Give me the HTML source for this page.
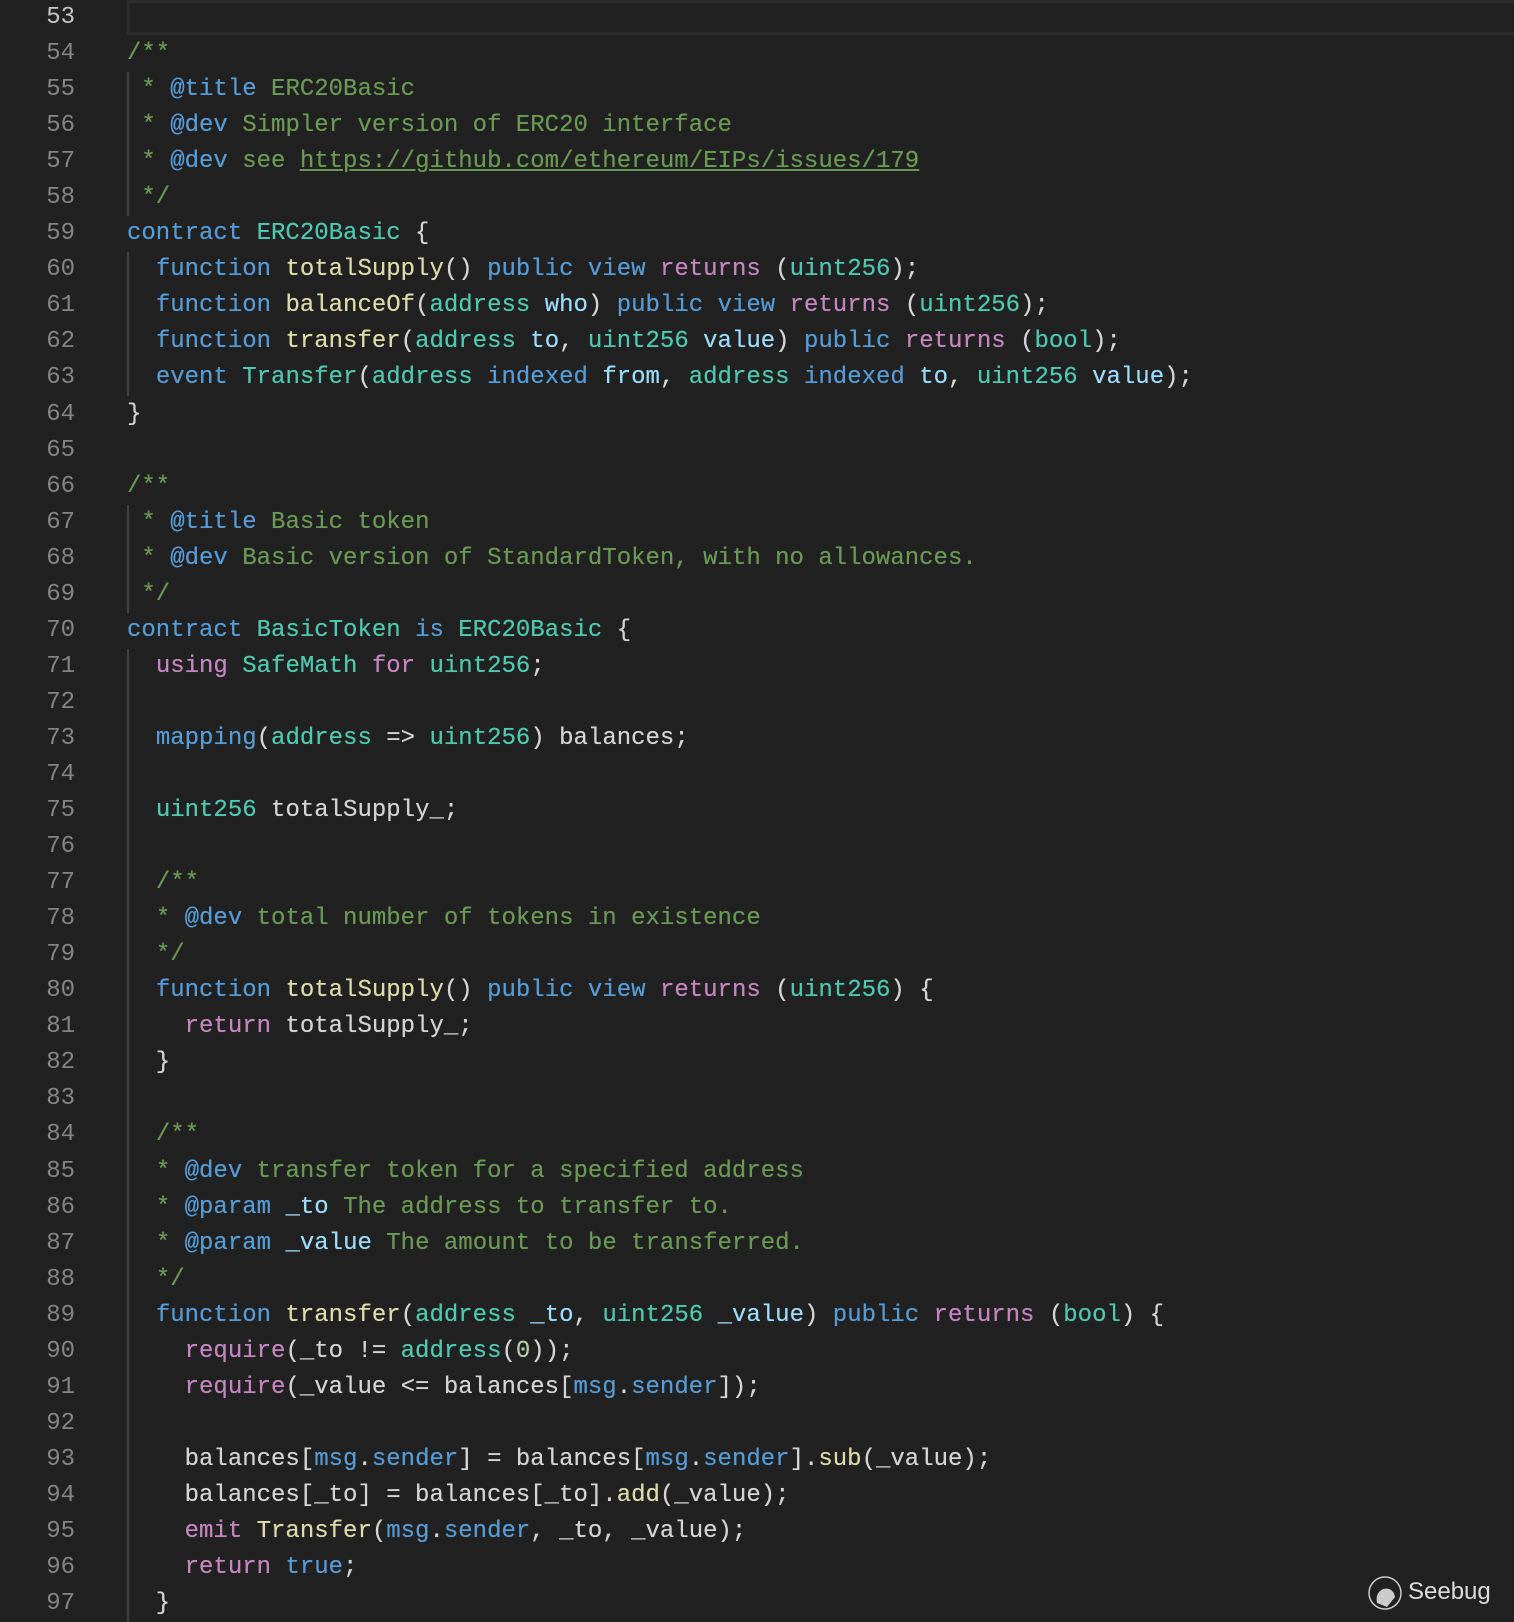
<!DOCTYPE html>
<html><head><meta charset="utf-8"><style>
html,body{margin:0;padding:0;background:#212121;width:1514px;height:1622px;overflow:hidden}
#g{position:absolute;left:0;top:0px;width:75px;text-align:right;font:24px/36.05px "Liberation Mono",monospace;color:#858585;white-space:pre}
#c{position:absolute;left:127px;top:0px;font:24px/36.05px "Liberation Mono",monospace;color:#d4d4d4;white-space:pre;margin:0;text-shadow:0 0 0.4px currentColor}
.k{color:#569cd6}.t{color:#4ec9b0}.f{color:#dcdcaa}.p{color:#c586c0}.v{color:#9cdcfe}.c{color:#6a9955}.n{color:#b5cea8}.u{text-decoration:underline}
.hl{position:absolute;left:127px;top:0;width:1400px;height:29px;border:3px solid #2c2c2c;border-right:none}
.ig{position:absolute;left:127px;width:2px;background:#404040}
#logo{position:absolute;color:#ddd;font:24px "Liberation Sans",sans-serif}
</style></head><body>
<div class="hl"></div>
<div class="ig" style="top:72px;height:144px"></div>
<div class="ig" style="top:252px;height:144px"></div>
<div class="ig" style="top:505px;height:108px"></div>
<div class="ig" style="top:649px;height:973px"></div>
<div id="g"><span style="color:#c6c6c6">53</span>
54
55
56
57
58
59
60
61
62
63
64
65
66
67
68
69
70
71
72
73
74
75
76
77
78
79
80
81
82
83
84
85
86
87
88
89
90
91
92
93
94
95
96
97</div>
<pre id="c">

<span class="c">/**</span>
<span class="c"> * <span class="k">@title</span> ERC20Basic</span>
<span class="c"> * <span class="k">@dev</span> Simpler version of ERC20 interface</span>
<span class="c"> * <span class="k">@dev</span> see <span class="u">https://github.com/ethereum/EIPs/issues/179</span></span>
<span class="c"> */</span>
<span class="k">contract</span> <span class="t">ERC20Basic</span> {
  <span class="k">function</span> <span class="f">totalSupply</span>() <span class="k">public</span> <span class="k">view</span> <span class="p">returns</span> (<span class="t">uint256</span>);
  <span class="k">function</span> <span class="f">balanceOf</span>(<span class="t">address</span> <span class="v">who</span>) <span class="k">public</span> <span class="k">view</span> <span class="p">returns</span> (<span class="t">uint256</span>);
  <span class="k">function</span> <span class="f">transfer</span>(<span class="t">address</span> <span class="v">to</span>, <span class="t">uint256</span> <span class="v">value</span>) <span class="k">public</span> <span class="p">returns</span> (<span class="t">bool</span>);
  <span class="k">event</span> <span class="t">Transfer</span>(<span class="t">address</span> <span class="k">indexed</span> <span class="v">from</span>, <span class="t">address</span> <span class="k">indexed</span> <span class="v">to</span>, <span class="t">uint256</span> <span class="v">value</span>);
}

<span class="c">/**</span>
<span class="c"> * <span class="k">@title</span> Basic token</span>
<span class="c"> * <span class="k">@dev</span> Basic version of StandardToken, with no allowances.</span>
<span class="c"> */</span>
<span class="k">contract</span> <span class="t">BasicToken</span> <span class="k">is</span> <span class="t">ERC20Basic</span> {
  <span class="p">using</span> <span class="t">SafeMath</span> <span class="p">for</span> <span class="t">uint256</span>;

  <span class="k">mapping</span>(<span class="t">address</span> =&gt; <span class="t">uint256</span>) balances;

  <span class="t">uint256</span> totalSupply_;

  <span class="c">/**</span>
  <span class="c">* <span class="k">@dev</span> total number of tokens in existence</span>
  <span class="c">*/</span>
  <span class="k">function</span> <span class="f">totalSupply</span>() <span class="k">public</span> <span class="k">view</span> <span class="p">returns</span> (<span class="t">uint256</span>) {
    <span class="p">return</span> totalSupply_;
  }

  <span class="c">/**</span>
  <span class="c">* <span class="k">@dev</span> transfer token for a specified address</span>
  <span class="c">* <span class="k">@param</span> <span class="v">_to</span> The address to transfer to.</span>
  <span class="c">* <span class="k">@param</span> <span class="v">_value</span> The amount to be transferred.</span>
  <span class="c">*/</span>
  <span class="k">function</span> <span class="f">transfer</span>(<span class="t">address</span> <span class="v">_to</span>, <span class="t">uint256</span> <span class="v">_value</span>) <span class="k">public</span> <span class="p">returns</span> (<span class="t">bool</span>) {
    <span class="p">require</span>(_to != <span class="t">address</span>(<span class="n">0</span>));
    <span class="p">require</span>(_value &lt;= balances[<span class="k">msg</span>.<span class="k">sender</span>]);

    balances[<span class="k">msg</span>.<span class="k">sender</span>] = balances[<span class="k">msg</span>.<span class="k">sender</span>].<span class="f">sub</span>(_value);
    balances[_to] = balances[_to].<span class="f">add</span>(_value);
    <span class="p">emit</span> <span class="f">Transfer</span>(<span class="k">msg</span>.<span class="k">sender</span>, _to, _value);
    <span class="p">return</span> <span class="k">true</span>;
  }</pre>
<svg style="position:absolute;left:1367px;top:1575px" width="36" height="36" viewBox="0 0 36 36"><circle cx="18" cy="18" r="16" fill="none" stroke="#ccc" stroke-width="1.5"/><path d="M10 28 Q8 18 16 14 Q26 12 28 22 L20 32 Z" fill="#ccc"/></svg>
<div id="logo" style="left:1408px;top:1578px">Seebug</div>
</body></html>
